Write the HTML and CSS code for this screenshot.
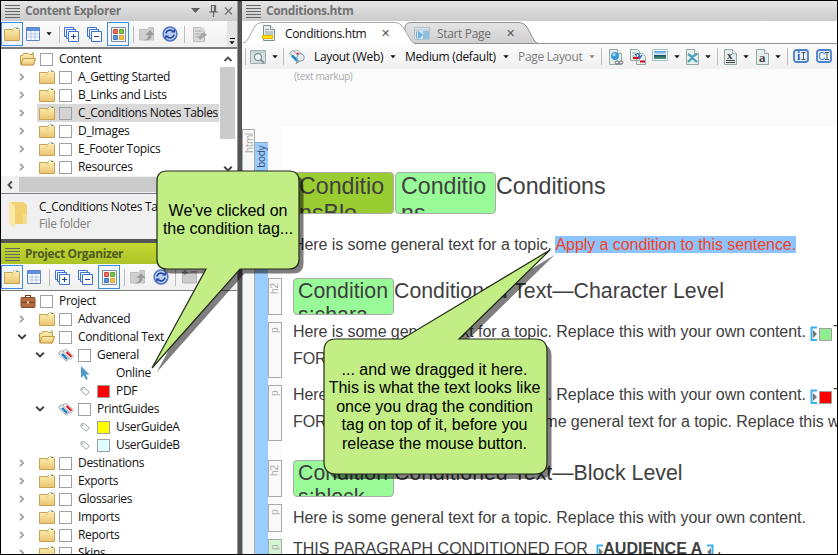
FILE: index.html
```html
<!DOCTYPE html>
<html lang="en">
<head>
<meta charset="utf-8">
<title>Conditions.htm</title>
<link rel="stylesheet" href="styles.css">
</head>
<body>
<svg class="defs" width="0" height="0">
  <defs>
    <linearGradient id="gold" x1="0" y1="0" x2="0" y2="1"><stop offset="0" stop-color="#fdf0b5"/><stop offset="1" stop-color="#e9c46f"/></linearGradient>
    <linearGradient id="tabg" x1="0" y1="0" x2="0" y2="1"><stop offset="0" stop-color="#e4e4e4"/><stop offset="1" stop-color="#cfcfcf"/></linearGradient>
    <linearGradient id="sky" x1="0" y1="0" x2="0" y2="1"><stop offset="0" stop-color="#4a9be0"/><stop offset=".5" stop-color="#e8f4fa"/><stop offset=".55" stop-color="#1d4a63"/><stop offset="1" stop-color="#5fae74"/></linearGradient>
  </defs>
  <symbol id="folder" viewBox="0 0 16 14"><path d="M.5 2.500h8l1.500-1.500h4.500l1 1.500v11h-15z" fill="url(#gold)" stroke="#c9a257"/><path d="M10 1.500h4" stroke="#fff"/><path d="M12 1.500h2" stroke="#36b0e0"/><path d="M8 4.500l1.500-1.500" stroke="#d8b063"/></symbol>
  <symbol id="open" viewBox="0 0 16 14"><path d="M.5 12.500v-9h2l1-2h5l1 1h4v4h2l-2 6.500z" fill="url(#gold)" stroke="#c79a4b"/><path d="M3 6.500h12.500l-2.500 6.500h-12z" fill="url(#gold)" stroke="#c79a4b"/><path d="M9 1h5" stroke="#fff"/><path d="M12 1h2" stroke="#46c02c"/></symbol>
  <symbol id="chev" viewBox="0 0 8 8"><path d="M2 .8l3.200 3.200L2 7.200" fill="none" stroke="#9a9a9a" stroke-width="1.700"/></symbol>
  <symbol id="chevd" viewBox="0 0 10 8"><path d="M1.200 1.800L5 5.500l3.800-3.700" fill="none" stroke="#404040" stroke-width="1.900"/></symbol>
  <symbol id="case" viewBox="0 0 15 14"><path d="M5 4V1.500h5V4" fill="none" stroke="#6b3a1e" stroke-width="1.200"/><rect x=".5" y="3.500" width="14" height="10" rx="1" fill="#b4693f" stroke="#8a4b28"/><path d="M1 8.500h13" stroke="#7a4020"/><path d="M6.500 7.500h2v2h-2z" fill="#e9d8b8"/></symbol>
  <symbol id="tags" viewBox="0 0 16 13"><path d="M.8 3.500L4.500 1.500 11.500 8.500 8.500 12.300 1.500 6z" fill="#e9eced" stroke="#8d9396" stroke-width=".8"/><path d="M5.500 1.200l3-.6 7 6.400-2.800 3.300L6 4.500z" fill="#f4f4f4" stroke="#999ea1" stroke-width=".8"/><path d="M4 5l5 5" stroke="#1b7ac6" stroke-width="2.300"/><path d="M8.500 3l5 4.700" stroke="#e01626" stroke-width="2"/></symbol>
  <symbol id="tag" viewBox="0 0 10 9"><path d="M1 1l3.500-.3L9.300 5 6.300 8.300 1.200 4z" fill="#fff" stroke="#8b9a98" stroke-width=".9"/><circle cx="2.800" cy="2.600" r=".7" fill="#8b9a98"/></symbol>
  <symbol id="cursor" viewBox="0 0 10 14"><path d="M1 0v12l2.800-2.700 2 4.500 2-.9-2-4.400H9.500z" fill="#4d9acb"/></symbol>
  <symbol id="table" viewBox="0 0 14 14"><path d="M.5 .5h13v13H.5z" fill="#fff" stroke="#5f82c0"/><path d="M1 1h12v3H1z" fill="#5f8edb"/><path d="M1 7h12M1 10h12M5 4v9M9 4v9" stroke="#a9c5ea"/></symbol>
  <symbol id="plus" viewBox="0 0 15 15"><path d="M2.500 9.500h-2v-9h9v2M4.500 11.500h-2v-9h9v2" fill="none" stroke="#3a72d8"/><path d="M4.500 4.500h10v10h-10z" fill="#fff" stroke="#3a72d8"/><path d="M7 9.500h5M9.500 7v5" stroke="#1f3fa0"/></symbol>
  <symbol id="minus" viewBox="0 0 15 15"><path d="M2.500 9.500h-2v-9h9v2M4.500 11.500h-2v-9h9v2" fill="none" stroke="#3a72d8"/><path d="M4.500 4.500h10v10h-10z" fill="#fff" stroke="#3a72d8"/><path d="M7 9.500h5" stroke="#1f3fa0"/></symbol>
  <symbol id="squares" viewBox="0 0 15 15"><path d="M.5 .5h14v14H.5z" fill="#f4f8fb" stroke="#7b8ea4"/><path d="M2.500 2.500h4v4h-4z" fill="#e9705f" stroke="#d9483c"/><path d="M8.500 2.500h4v4h-4z" fill="#7fc04f" stroke="#5fa335"/><path d="M2.500 8.500h4v4h-4z" fill="#5c95da" stroke="#3f78bf"/><path d="M8.500 8.500h4v4h-4z" fill="#f6c24d" stroke="#e3a22a"/></symbol>
  <symbol id="grayup" viewBox="0 0 16 14"><path d="M.5 2.500h8l1.500-2h4.500v12.500H.5z" fill="#cfcfcf" stroke="#c0c0c0"/><path d="M5 13.500c3-1 4.500-3 4.500-5.500H6.500L11 3l4.500 5h-3c0 4-3 5.500-7.500 5.500z" fill="#9a9a9a"/></symbol>
  <symbol id="refresh" viewBox="0 0 16 16"><circle cx="8" cy="8" r="6.900" fill="#b9cff3" stroke="#5276c2" stroke-width="1.500"/><path d="M4 7.500C4.500 4 9 3 11 5.500M12 8.500c-.5 3.500-5 4.500-7 2" fill="none" stroke="#26479f" stroke-width="1.600"/><path d="M9 6.500h4V3zM7 9.500H3V13z" fill="#26479f"/></symbol>
  <symbol id="grayedit" viewBox="0 0 14 15"><path d="M.5 .5h8l3 3v11H.5z" fill="#ddd" stroke="#bbb"/><path d="M2 4h7M2 7h9M2 10h5" stroke="#aaa"/><path d="M5 10l6-5 3 3-7 5z" fill="#a8a8a8"/></symbol>
  <symbol id="graynew" viewBox="0 0 16 14"><path d="M.5 3.500h7l1.500-2h5.500v11.500H.5z" fill="#ccc" stroke="#b5b5b5"/><path d="M0 2.500h6M3 0v5" stroke="#888" stroke-width="1.500"/></symbol>
  <symbol id="page" viewBox="0 0 13 16"><path d="M.5 .5h8l4 4v11H.5z" fill="#e5eeec" stroke="#91aaa6"/><path d="M8.500 .5v4h4" fill="#fff" stroke="#91aaa6"/></symbol>
  <symbol id="down" viewBox="0 0 6 4"><path d="M.3 .3h5.400L3 3.300z" fill="currentColor"/></symbol>
</svg>

<div class="window">
  <div class="left">
    <section class="pane explorer">
      <header class="titlebar"><i class="grip"></i><span class="name">Content Explorer</span>
        <svg class="winbtns" width="44" height="14" viewBox="0 0 44 14"><path d="M1 4h9L5.500 9z" fill="#5f5f5f"/><path d="M21.500 1.500h4v6h-4zM24.500 2v5M19 8h9M23.500 8v5" fill="none" stroke="#666" stroke-width="1.200"/><path d="M35 3.500l7 7M42 3.500l-7 7" stroke="#6e6e6e" stroke-width="1.200"/></svg></header>
      <div class="toolbar">
        <span class="btn on"><svg width="16" height="14"><use href="#folder"/></svg></span>
        <svg class="t-table" width="14" height="14"><use href="#table"/></svg>
        <svg class="t-down" width="6" height="4"><use href="#down"/></svg>
        <i class="sep s1"></i>
        <svg class="t-plus" width="15" height="15"><use href="#plus"/></svg>
        <svg class="t-minus" width="15" height="15"><use href="#minus"/></svg>
        <span class="btn on sq"><svg width="15" height="15"><use href="#squares"/></svg></span>
        <i class="sep s2"></i>
        <svg class="t-up" width="16" height="14"><use href="#grayup"/></svg>
        <svg class="t-ref" width="16" height="16"><use href="#refresh"/></svg>
        <i class="sep s3"></i>
        <svg class="t-edit" width="14" height="15"><use href="#grayedit"/></svg>
        <span class="overflow"><i></i><svg width="6" height="4"><use href="#down"/></svg></span>
      </div>
      <div class="treewrap">
        <div class="tree">
          <div class="row l0"><svg class="fi" width="16" height="14"><use href="#open"/></svg><i class="cb"></i><span>Content</span></div>
          <div class="row l1"><svg class="ch" width="8" height="8"><use href="#chev"/></svg><svg class="fi" width="16" height="14"><use href="#folder"/></svg><i class="cb"></i><span>A_Getting Started</span></div>
          <div class="row l1"><svg class="ch" width="8" height="8"><use href="#chev"/></svg><svg class="fi" width="16" height="14"><use href="#folder"/></svg><i class="cb"></i><span>B_Links and Lists</span></div>
          <div class="row l1 sel"><svg class="ch" width="8" height="8"><use href="#chev"/></svg><svg class="fi" width="16" height="14"><use href="#folder"/></svg><i class="cb"></i><span>C_Conditions Notes Tables</span></div>
          <div class="row l1"><svg class="ch" width="8" height="8"><use href="#chev"/></svg><svg class="fi" width="16" height="14"><use href="#folder"/></svg><i class="cb"></i><span>D_Images</span></div>
          <div class="row l1"><svg class="ch" width="8" height="8"><use href="#chev"/></svg><svg class="fi" width="16" height="14"><use href="#folder"/></svg><i class="cb"></i><span>E_Footer Topics</span></div>
          <div class="row l1"><svg class="ch" width="8" height="8"><use href="#chev"/></svg><svg class="fi" width="16" height="14"><use href="#folder"/></svg><i class="cb"></i><span>Resources</span></div>
        </div>
        <div class="vscroll"><svg width="10" height="8" viewBox="0 0 10 8"><path d="M1.500 6L5 2.500 8.500 6" fill="none" stroke="#505050" stroke-width="1.900"/></svg><i></i><svg width="10" height="8"><use href="#chevd"/></svg></div>
      </div>
      <div class="hscroll"><svg width="8" height="10" viewBox="0 0 8 10"><path d="M5.800 1.500L2.500 5l3.300 3.500" fill="none" stroke="#505050" stroke-width="1.900"/></svg><i></i></div>
      <div class="info">
        <svg width="18" height="27" viewBox="0 0 18 27"><path d="M1 1h13l4 3v19H6z" fill="#f3d173"/><path d="M0 0l6 5v22l-6-4z" fill="#fbe9a8"/><path d="M14 13h4v10h-4z" fill="#f7dc8b"/></svg>
        <div><p>C_Conditions Notes Tables</p><p class="kind">File folder</p></div>
      </div>
    </section>
    <section class="pane organizer">
      <header class="titlebar green"><i class="grip"></i><span class="name">Project Organizer</span></header>
      <div class="toolbar">
        <span class="btn on"><svg width="16" height="14"><use href="#folder"/></svg></span>
        <svg class="t-table o" width="14" height="14"><use href="#table"/></svg>
        <i class="sep s1"></i>
        <svg class="t-plus" width="15" height="15"><use href="#plus"/></svg>
        <svg class="t-minus" width="15" height="15"><use href="#minus"/></svg>
        <span class="btn on sq"><svg width="15" height="15"><use href="#squares"/></svg></span>
        <i class="sep s2"></i>
        <svg class="t-up" width="16" height="14"><use href="#grayup"/></svg>
        <svg class="t-ref" width="16" height="16"><use href="#refresh"/></svg>
        <i class="sep s3"></i>
        <svg class="t-edit" width="16" height="14"><use href="#graynew"/></svg>
      </div>
      <div class="tree">
        <div class="row l0"><svg class="fi" width="16" height="14"><use href="#case"/></svg><i class="cb"></i><span>Project</span></div>
        <div class="row l1"><svg class="ch" width="8" height="8"><use href="#chev"/></svg><svg class="fi" width="16" height="14"><use href="#folder"/></svg><i class="cb"></i><span>Advanced</span></div>
        <div class="row l1"><svg class="ch" width="10" height="8"><use href="#chevd"/></svg><svg class="fi" width="16" height="14"><use href="#open"/></svg><i class="cb"></i><span>Conditional Text</span></div>
        <div class="row l2"><svg class="ch" width="10" height="8"><use href="#chevd"/></svg><svg class="fi" width="16" height="13"><use href="#tags"/></svg><i class="cb"></i><span>General</span></div>
        <div class="row l3"><svg class="fi" width="10" height="14"><use href="#cursor"/></svg><i class="cb none"></i><span>Online</span></div>
        <div class="row l3"><svg class="fi" width="10" height="9"><use href="#tag"/></svg><i class="cb red"></i><span>PDF</span></div>
        <div class="row l2"><svg class="ch" width="10" height="8"><use href="#chevd"/></svg><svg class="fi" width="16" height="13"><use href="#tags"/></svg><i class="cb"></i><span>PrintGuides</span></div>
        <div class="row l3"><svg class="fi" width="10" height="9"><use href="#tag"/></svg><i class="cb yellow"></i><span>UserGuideA</span></div>
        <div class="row l3"><svg class="fi" width="10" height="9"><use href="#tag"/></svg><i class="cb cyan"></i><span>UserGuideB</span></div>
        <div class="row l1"><svg class="ch" width="8" height="8"><use href="#chev"/></svg><svg class="fi" width="16" height="14"><use href="#folder"/></svg><i class="cb"></i><span>Destinations</span></div>
        <div class="row l1"><svg class="ch" width="8" height="8"><use href="#chev"/></svg><svg class="fi" width="16" height="14"><use href="#folder"/></svg><i class="cb"></i><span>Exports</span></div>
        <div class="row l1"><svg class="ch" width="8" height="8"><use href="#chev"/></svg><svg class="fi" width="16" height="14"><use href="#folder"/></svg><i class="cb"></i><span>Glossaries</span></div>
        <div class="row l1"><svg class="ch" width="8" height="8"><use href="#chev"/></svg><svg class="fi" width="16" height="14"><use href="#folder"/></svg><i class="cb"></i><span>Imports</span></div>
        <div class="row l1"><svg class="ch" width="8" height="8"><use href="#chev"/></svg><svg class="fi" width="16" height="14"><use href="#folder"/></svg><i class="cb"></i><span>Reports</span></div>
        <div class="row l1"><svg class="ch" width="8" height="8"><use href="#chev"/></svg><svg class="fi" width="16" height="14"><use href="#folder"/></svg><i class="cb"></i><span>Skins</span></div>
      </div>
    </section>
  </div>

  <main class="editor">
    <header class="titlebar"><i class="grip"></i><span class="name">Conditions.htm</span></header>
    <div class="tabs">
      <svg class="tabshape" width="595" height="23" viewBox="0 0 595 23">
        <path d="M163 22.500L163 6Q164 1.500 169 1.500H276Q283 1.500 286 8L292 19Q294 22.500 297 22.500z" fill="url(#tabg)" stroke="#8e9490"/>
        <path d="M0 22.500Q4 22 6 18L13 5Q15 1.500 20 1.500H152Q158 1.500 161 6L168 18Q170 22.500 174 22.500" fill="#fff" stroke="#a7aaa7"/>
        <path d="M0 22.500h173" stroke="#fff"/><path d="M172 22.500h423" stroke="#8e9490"/>
      </svg>
      <div class="tab one"><svg width="14" height="17" viewBox="0 0 14 17"><path d="M1.500 .5h7l4 4v11h-11z" fill="#e5eeec" stroke="#78918d"/><path d="M8.500 .5v4h4" fill="#fff" stroke="#78918d"/><path d="M3 4.500h4M3 7h8M3 9h8" stroke="#8da19e"/><path d="M.5 10.500h10v3H.5z" fill="#ffe400" stroke="#e9b500"/></svg><span>Conditions.htm</span><b>✕</b></div>
      <div class="tab two"><svg width="16" height="13" viewBox="0 0 16 13"><path d="M.5 .5h15v12H.5z" fill="#d3e2ea" stroke="#b4c3cb"/><path d="M1 3h14" stroke="#b4c8d4"/><path d="M9 4h6v8H9z" fill="#8fc1e2"/><path d="M2.500 4.500v7M4.500 4.500v7l4-3.500z" fill="#6fb0dc" stroke="#6fb0dc"/></svg><span>Start Page</span><b>✕</b></div>
    </div>
    <div class="toolbar dt">
      <i class="sep"></i>
      <svg class="d1" width="16" height="14" viewBox="0 0 16 14"><path d="M.5 .5h15v13H.5z" fill="#d5e0e0" stroke="#9eb0b0"/><path d="M1 2h14" stroke="#b7c8c8"/><circle cx="8" cy="7" r="3.500" fill="#f2f7f8" stroke="#82959d" stroke-width="1.300"/><path d="M10.500 9.500l3.500 3.500" stroke="#8a949a" stroke-width="2"/></svg>
      <svg class="d2" width="6" height="4"><use href="#down"/></svg>
      <i class="sep d3"></i>
      <svg class="d4" width="17" height="15" viewBox="0 0 17 15"><path d="M.5 3L4 .5 12 8l-3 5z" fill="#eee" stroke="#9a9a9a"/><path d="M5 1l4-.5L14 5" fill="none" stroke="#aaa"/><path d="M3 5.500l5 5" stroke="#1a8ad0" stroke-width="2.500"/><path d="M8 3l2 2" stroke="#e01626" stroke-width="2"/><circle cx="11.500" cy="7.500" r="3.800" fill="#dfe9ef" stroke="#8499a4"/><path d="M9 10.500l-2 3.500" stroke="#8499a4" stroke-width="1.500"/></svg>
      <span class="d5">Layout (Web)</span><svg class="d6" width="6" height="4"><use href="#down"/></svg>
      <span class="d7">Medium (default)</span><svg class="d8" width="6" height="4"><use href="#down"/></svg>
      <span class="d9">Page Layout</span><svg class="d10" width="6" height="4"><use href="#down"/></svg>
      <i class="sep d11"></i>
      <svg class="d12" width="15" height="16" viewBox="0 0 15 16"><use href="#page" width="13" height="16"/><circle cx="6" cy="7" r="4" fill="#3d9ad5"/><circle cx="5" cy="5.500" r="1.600" fill="#a6dcf5"/><path d="M6 13.500a2 1.500 0 1 1 4 0a2 1.500 0 1 1-4 0M10 13.500a2 1.500 0 1 1 4 0a2 1.500 0 1 1-4 0" fill="#eee" stroke="#666"/></svg>
      <svg class="d13" width="16" height="16" viewBox="0 0 16 16"><path d="M.5 .5h7l2 2v9h-9zM6.500 4.500h6l3 3v8h-9z" fill="#eaf1ef" stroke="#91aaa6"/><path d="M2 4h4M2 7h4" stroke="#9db0ad"/><path d="M5 6q4-3 5 2M8 7l2 2 2-3" fill="none" stroke="#2d68c4" stroke-width="1.300"/><path d="M3 9h6M10 12.500h5" stroke="#d8001a" stroke-width="2"/></svg>
      <svg class="d14" width="16" height="12" viewBox="0 0 16 12"><path d="M.5 .5h15v11H.5z" fill="#fff" stroke="#a9bfc2"/><path d="M2 2h12v8H2z" fill="url(#sky)"/><path d="M2 8.500q6-1 12 .5v1H2z" fill="#3f8f6a"/></svg>
      <svg class="d15" width="6" height="4"><use href="#down"/></svg>
      <svg class="d16" width="13" height="16" viewBox="0 0 13 16"><use href="#page"/><path d="M2 5l4 3 5-3M2 13l4-4 5 4" fill="none" stroke="#4a9fb8" stroke-width="2.200"/></svg>
      <svg class="d17" width="6" height="4"><use href="#down"/></svg>
      <i class="sep d18"></i>
      <svg class="d19" width="13" height="16" viewBox="0 0 13 16"><use href="#page"/><text x="3" y="9.500" class="ic x">x</text><path d="M2 11.500h9M2 13.500h9" stroke="#444"/></svg>
      <svg class="d20" width="6" height="4"><use href="#down"/></svg>
      <svg class="d21" width="13" height="16" viewBox="0 0 13 16"><use href="#page"/><text x="3" y="13" class="ic big">a</text></svg>
      <svg class="d22" width="6" height="4"><use href="#down"/></svg>
      <i class="sep d23"></i>
      <svg class="d24" width="16" height="14" viewBox="0 0 16 14"><rect x="1" y="1" width="14" height="12" rx="2.500" fill="#eaf2fc" stroke="#4c82c8" stroke-width="1.800"/><text x="4" y="11" class="ic blue">i</text><path d="M8.500 3.500h4M8.500 10.500h4M10.500 3.500v7" stroke="#555"/></svg>
      <svg class="d25" width="16" height="14" viewBox="0 0 16 14"><rect x="1" y="1" width="14" height="12" rx="2.500" fill="#eaf2fc" stroke="#4c82c8" stroke-width="1.800"/><text x="2.300" y="10.500" class="ic cc">C</text><path d="M9 3.500h4M9 10.500h4M11 3.500v7" stroke="#555"/></svg>
    </div>
    <div class="markup">(text markup)</div>
    <div class="doc">
      <div class="col html"><span>html</span></div>
      <div class="col body"><span>body</span></div>
      <div class="page">
        <div class="blk h1"><i class="gut"></i><h1><span class="chip olive">ConditionsBlo</span><span class="chip">Conditions</span>Conditions</h1></div>
        <div class="blk p0"><i class="gut"></i><p>Here is some general text for a topic. <mark>Apply a condition to this sentence.</mark></p></div>
        <div class="blk h2"><i class="gut">h2</i><h2><span class="chip">Conditions:chara</span>Conditioned Text—Character Level</h2></div>
        <div class="blk p1"><i class="gut">p</i><p>Here is some general text for a topic. Replace this with your own content. <svg class="mk" width="22" height="16" viewBox="0 0 22 16"><path d="M7 1.500H1.500v12.500H7" fill="none" stroke="#3bb0ee" stroke-width="2"/><path d="M3 4v8l4-4z" fill="#777"/><path d="M9.500 2.500h12v12h-12z" fill="#90ee90" stroke="#a0a0a0"/></svg><em>T</em><br>FOR</p></div>
        <div class="blk p2"><i class="gut">p</i><p>Here is some general text for a topic. Replace this with your own content. <svg class="mk" width="22" height="16" viewBox="0 0 22 16"><path d="M7 1.500H1.500v12.500H7" fill="none" stroke="#3bb0ee" stroke-width="2"/><path d="M3 4v8l4-4z" fill="#777"/><path d="M9.500 2.500h12v12h-12z" fill="#f00" stroke="#a0a0a0"/></svg><em>T</em><br><span class="for">FOR</span>Here is some general text for a topic. Replace this with your own content.</p></div>
        <div class="blk h2 b"><i class="gut">h2</i><h2><span class="chip">Conditions:block</span>Conditioned Text—Block Level</h2></div>
        <div class="blk p3"><i class="gut">p</i><p>Here is some general text for a topic. Replace this with your own content.</p></div>
        <div class="blk p4"><i class="gut">p</i><p>THIS PARAGRAPH CONDITIONED FOR <svg class="br l" width="7" height="15" viewBox="0 0 7 15"><path d="M7 1.500H1.500v13" fill="none" stroke="#3bb0ee" stroke-width="2"/><path d="M3 4v8l4-4z" fill="#777"/></svg><strong>AUDIENCE A</strong> <svg class="br" width="7" height="15" viewBox="0 0 7 15"><path d="M0 1.500h5.500v13" fill="none" stroke="#3bb0ee" stroke-width="2"/><path d="M4 4v8l-4-4z" fill="#777"/></svg>&thinsp;.</p></div>
      </div>
    </div>
  </main>
</div>

<svg class="bubbles" width="838" height="555" viewBox="0 0 838 555">
  <g fill="#000" fill-opacity=".5">
    <path transform="translate(4.500 4.500)" d="M167 171H289Q299 171 299 181V259Q299 269 289 269H240L152 368 206 269H167Q157 269 157 259V181Q157 171 167 171z"/>
    <path transform="translate(4.500 5)" d="M336 339H402L550 250 459 339H535Q547 339 547 351V462Q547 474 535 474H336Q324 474 324 462V351Q324 339 336 339z"/>
  </g>
  <g fill="#c2ee85" stroke="#222a18" stroke-width="1.200">
    <path d="M167 171H289Q299 171 299 181V259Q299 269 289 269H240L152 368 206 269H167Q157 269 157 259V181Q157 171 167 171z"/>
    <path d="M336 339H402L550 250 459 339H535Q547 339 547 351V462Q547 474 535 474H336Q324 474 324 462V351Q324 339 336 339z"/>
  </g>
</svg>
<div class="say a">We've clicked on<br>the condition tag...</div>
<div class="say b">... and we dragged it here.<br>This is what the text looks like<br>once you drag the condition<br>tag on top of it, before you<br>release the mouse button.</div>
</body>
</html>
```
FILE: styles.css
```css
* { box-sizing: border-box; }
body { margin: 0; width: 838px; height: 555px; overflow: hidden; position: relative; font: 12px/18px "Open Sans", "Noto Sans", sans-serif; letter-spacing: -0.33px; color: #111; }
p, h1, h2 { margin: 0; font-weight: normal; }
svg { display: block; flex: none; }
i { display: block; flex: none; font-style: normal; }
.defs { position: absolute; }
.window { width: 838px; height: 555px; border: 1px solid #000; display: flex; background: #555; gap: 4px; overflow: hidden; }
.left { width: 237px; display: flex; flex-direction: column; gap: 4px; border-right: 1px solid #999; flex: none; }
.pane { background: #fff; overflow: hidden; display: flex; flex-direction: column; }
.explorer { height: 238px; flex: none; }
.organizer { height: 311px; flex: none; }

.titlebar { height: 20px; flex: none; display: flex; align-items: center; background: linear-gradient(#e6e6e6, #cbcbcb); color: #737373; font-weight: bold; padding-left: 4px; letter-spacing: -0.38px; }
.titlebar .name { margin-left: 5px; }
.titlebar.green { height: 21px; background: linear-gradient(#c3d832, #acc328); color: #515c22; padding-top: 1px; }
.grip { width: 15px; height: 13px; background: repeating-linear-gradient(#666 0 1px, transparent 1px 3px); }
.winbtns { margin-left: auto; margin-right: 3px; }

.toolbar { height: 28px; flex: none; display: flex; align-items: center; background: linear-gradient(#fbfbfb, #f0f0f0); border-bottom: 2px solid #7c7c7c; }
.btn { width: 22px; height: 24px; display: flex; align-items: center; justify-content: center; flex: none; }
.btn.on { border: 1px solid #3c8fe0; background: #f1f7fe; }
.sep { width: 1px; height: 17px; background: #bcbcbc; flex: none; }
.t-table { margin-left: 3px; }
.t-table.o { margin-left: 4px; }
.t-down { margin-left: 6px; }
.s1 { margin-left: 7px; }
.t-plus { margin-left: 4px; }
.t-minus { margin-left: 8px; }
.sq { margin-left: 5px; }
.s2 { margin-left: 4px; }
.t-up { margin-left: 5px; }
.t-ref { margin-left: 7px; }
.s3 { margin-left: 6px; }
.t-edit { margin-left: 8px; }
.organizer .toolbar { height: 27px; border-bottom-width: 1px; }
.organizer .s1 { margin-left: 8px; }
.organizer .t-plus { margin-left: 5px; }
.organizer .t-edit { margin-left: 6px; }
.overflow { margin-left: auto; width: 10px; height: 100%; background: #e4e4e4; display: flex; flex-direction: column; justify-content: flex-end; align-items: center; padding-bottom: 2px; }
.overflow i { width: 5px; height: 1px; background: #000; margin-bottom: 2px; }

.treewrap { display: flex; height: 127px; flex: none; }
.tree { flex: 1; min-width: 0; padding-top: 1px; overflow: hidden; }
.row { height: 18px; display: flex; align-items: center; white-space: nowrap; }
.ch { width: 10px; margin-right: 13px; }
.row .cb { width: 13px; height: 13px; border: 1px solid #a0a0a0; background: #fff; margin-left: 4px; }
.row span { margin-left: 6px; }
.row .cb.none { border-color: transparent; }
.row .cb.red { background: #f00; }
.row .cb.yellow { background: #ff0; }
.row .cb.cyan { background: #e0ffff; }
.l0 { padding-left: 19px; }
.l1 { padding-left: 16px; }
.l1 .ch { margin-right: 12px; }
.l2 { padding-left: 34px; }
.l3 { padding-left: 79px; }
.l3 .cb { margin-left: 7px; }
.sel { background: linear-gradient(#d9d9d9, #d9d9d9) 36px 0 no-repeat; }
.sel .cb { background: #d3d3d3; }
.vscroll { width: 17px; display: flex; flex-direction: column; align-items: center; padding: 6px 0 3px; margin-right: 1px; }
.vscroll i { width: 15px; height: 72px; background: #cbcbcb; margin-top: 4px; margin-bottom: auto; }
.hscroll { height: 17px; flex: none; display: flex; align-items: center; padding-left: 5px; background: #f0f0f0; }
.hscroll i { flex: 1; height: 15px; background: #cbcbcb; margin-left: 5px; }
.info { flex: 1; background: #f0f0f0; border-top: 1px solid #7d7d88; display: flex; padding: 7px 0 0 8px; gap: 12px; white-space: nowrap; line-height: 17px; }
.info div { margin-top: -3px; }
.kind { color: #808080; }

.editor { flex: 1; min-width: 0; background: #fbfbfb; display: flex; flex-direction: column; overflow: hidden; }
.tabs { height: 23px; flex: none; background: #fff; position: relative; display: flex; align-items: center; font-size: 12px; }
.tabshape { position: absolute; left: 0; top: 0; }
.tab { position: relative; display: flex; align-items: center; white-space: nowrap; height: 23px; padding-top: 2px; }
.tab b { font: 11px/18px "DejaVu Sans", sans-serif; color: #555; letter-spacing: 0; }
.one { width: 163px; padding-left: 20px; }
.one span { width: 96px; margin-left: 9px; }
.two { padding-left: 9px; color: #6f6f6f; }
.two span { width: 69px; margin-left: 7px; }
.dt { height: 25px; border: 0; padding-left: 3px; white-space: nowrap; }
.d1 { margin-left: 4px; } .d2 { margin-left: 6px; } .d3 { margin-left: 5px; } .d4 { margin-left: 5px; }
.d5 { margin-left: 8px; width: 73px; } .d6 { margin-left: 3px; } .d7 { margin-left: 9px; width: 95px; }
.d8 { margin-left: 3px; } .d9 { margin-left: 9px; width: 68px; color: #7c7c7c; } .d10 { margin-left: 3px; color: #888; }
.d11 { margin-left: 6px; } .d12 { margin-left: 7px; } .d13 { margin-left: 6px; } .d14 { margin-left: 6px; margin-top: -4px; }
.d15 { margin-left: 6px; } .d16 { margin-left: 6px; } .d17 { margin-left: 6px; } .d18 { margin-left: 6px; }
.d19 { margin-left: 6px; } .d20 { margin-left: 6px; } .d21 { margin-left: 7px; } .d22 { margin-left: 6px; }
.d23 { margin-left: 6px; } .d24 { margin-left: 5px; } .d25 { margin-left: 7px; }
.d24, .d25 { margin-top: -2px; }
.d1, .d4 { margin-top: 1px; }
.ic { font: bold 12px "Liberation Serif", serif; fill: #444; letter-spacing: 0; }
.ic.x { font-size: 11px; }
.ic.big { font-size: 13px; }
.ic.blue { fill: #2f66c0; }
.ic.cc { font: 10px "Liberation Sans", sans-serif; fill: #3a78d0; }
.markup { height: 60px; flex: none; font-size: 10px; line-height: 14px; color: #aaa; padding-left: 52px; letter-spacing: -0.35px; }

.doc { flex: 1; display: flex; font-family: "Liberation Sans", sans-serif; letter-spacing: 0; color: #404040; min-height: 0; margin-top: -2px; }
.col { width: 13px; flex: none; margin-top: 2px; border: 1px solid #aaa; border-bottom: 0; background: #f7f7f7; font: 10px/12px "Open Sans", sans-serif; color: #aaa; }
.col span, .gut { writing-mode: vertical-rl; transform: rotate(180deg); }
.col span { display: block; margin-top: 3px; width: 11px; letter-spacing: -0.4px; }
.col.body { margin-top: 15px; border-width: 1px 0 0; border-color: #8ba7c2; background: #99ccff; color: #3a5066; }
.page { flex: 1; min-width: 0; background: linear-gradient(#fff, #fff) 14px 0 no-repeat; overflow: hidden; }
.blk { display: flex; white-space: nowrap; }
.gut { width: 14px; border: 1px solid #aaa; background: #f9f9f9; font: 10px/11px "Liberation Sans", sans-serif; color: #aaa; text-align: right; padding-bottom: 4px; margin-right: 11px; align-self: stretch; }
.blk h1 { font-size: 23.2px; line-height: 29px; display: flex; height: 42px; }
.blk h2 { font-size: 21.3px; line-height: 26px; display: flex; height: 37px; }
.blk p { font-size: 16px; line-height: 27.3px; letter-spacing: -0.065px; }
.chip { width: 101px; height: 100%; flex: none; border: 1px solid #aaa; border-radius: 4px; background: #98fb98; padding-left: 5px; white-space: normal; word-break: break-all; overflow: hidden; line-height: 26.5px; }
.h2 .chip { padding-left: 4px; line-height: 24px; }
.chip.olive { background: #9acd32; margin-right: 1px; }
.blk.h1 { margin-top: 45px; }
.p0 { margin-top: 17px; height: 28px; }
mark { background: #8cc4ff; color: #f9401a; }
.blk.h2 { margin-top: 19px; }
.p1 { margin-top: 7px; height: 56px; }
.p2 { margin-top: 7px; height: 56px; }
.p1 p, .p2 p { margin-top: -4px; }
.blk.h2.b { margin-top: 19px; }
.p3 { margin-top: 7px; height: 28px; }
.p4 { margin-top: 7px; height: 28px; }
.p4 p { letter-spacing: 0; margin-top: -4px; }
.p4 .gut { background: #d4f5d4; }
.mk, .br { display: inline-block; vertical-align: -5px; }
.br.l { margin-left: 4px; }
em { font-style: normal; margin-left: 1px; }
.for { display: inline-block; width: 180px; }

.bubbles { position: absolute; left: 0; top: 0; }
.say { position: absolute; font: 16px/18px "Liberation Sans", sans-serif; letter-spacing: 0; color: #000; text-align: center; white-space: nowrap; }
.say.a { left: 157px; top: 202px; width: 142px; letter-spacing: -0.03px; }
.say.b { left: 324px; top: 361px; width: 221px; line-height: 18.4px; }
```
